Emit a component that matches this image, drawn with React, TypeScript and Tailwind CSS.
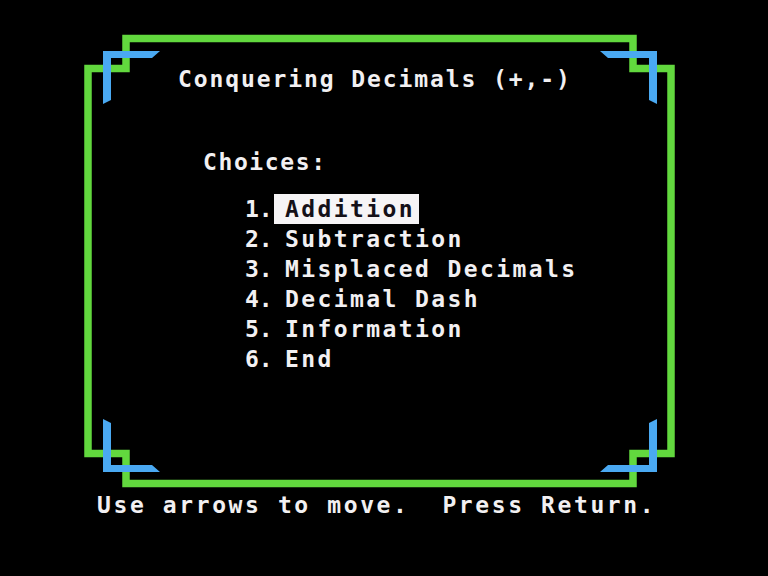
import React from 'react'

const choices = [
  { num: '1.', label: 'Addition' },
  { num: '2.', label: 'Subtraction' },
  { num: '3.', label: 'Misplaced Decimals' },
  { num: '4.', label: 'Decimal Dash' },
  { num: '5.', label: 'Information' },
  { num: '6.', label: 'End' },
]

// stepped double border, green frame with blue corner brackets
function Frame() {
  return (
    <svg className="pointer-events-none absolute inset-0" width="768" height="576" viewBox="0 0 768 576">
      <path
        d="M88 453.5 V68.5 H126 V38.5 H633 V68.5 H671 V453.5 H633 V483.5 H126 V453.5 Z"
        fill="none"
        stroke="#62d83e"
        strokeWidth="7.5"
        strokeLinejoin="miter"
      />
      <g fill="#4aa9f2">
        <polygon points="103,51 160,51 152,58 111,58 111,100 103,104" />
        <polygon points="657,51 600,51 608,58 649,58 649,100 657,104" />
        <polygon points="103,472 160,472 152,465 111,465 111,423 103,419" />
        <polygon points="657,472 600,472 608,465 649,465 649,423 657,419" />
      </g>
    </svg>
  )
}

export default function App() {
  const selected = 0

  return (
    <div className="relative w-[768px] h-[576px] bg-black overflow-hidden text-[#f2f0f2] font-bold text-[23px] leading-[30px] font-['DejaVu_Sans_Mono','Liberation_Mono',monospace]">
      <Frame />

      <div className="relative flex flex-col pt-[64px]">
        {/* title */}
        <div className="pl-[178px] tracking-[1.9px] whitespace-pre">Conquering Decimals (+,-)</div>

        {/* menu */}
        <div className="mt-[53px] pl-[203px] tracking-[1.6px]">Choices:</div>

        <div className="mt-[17px] flex flex-col pl-[245px]">
          {choices.map((c, i) => (
            <div key={c.num} className="flex h-[30px]">
              <span className="w-[29px] tracking-normal">{c.num}</span>
              <span
                className={`pl-[11px] pr-[4px] tracking-[2.4px] whitespace-pre ${i === selected ? 'bg-[#f6f4f6] text-[#141018]' : ''}`}
              >
                {c.label}
              </span>
            </div>
          ))}
        </div>

        {/* footer hint */}
        <div className="mt-[116px] pl-[97px] tracking-[2.6px] whitespace-pre">Use arrows to move.  Press Return.</div>
      </div>
    </div>
  )
}
